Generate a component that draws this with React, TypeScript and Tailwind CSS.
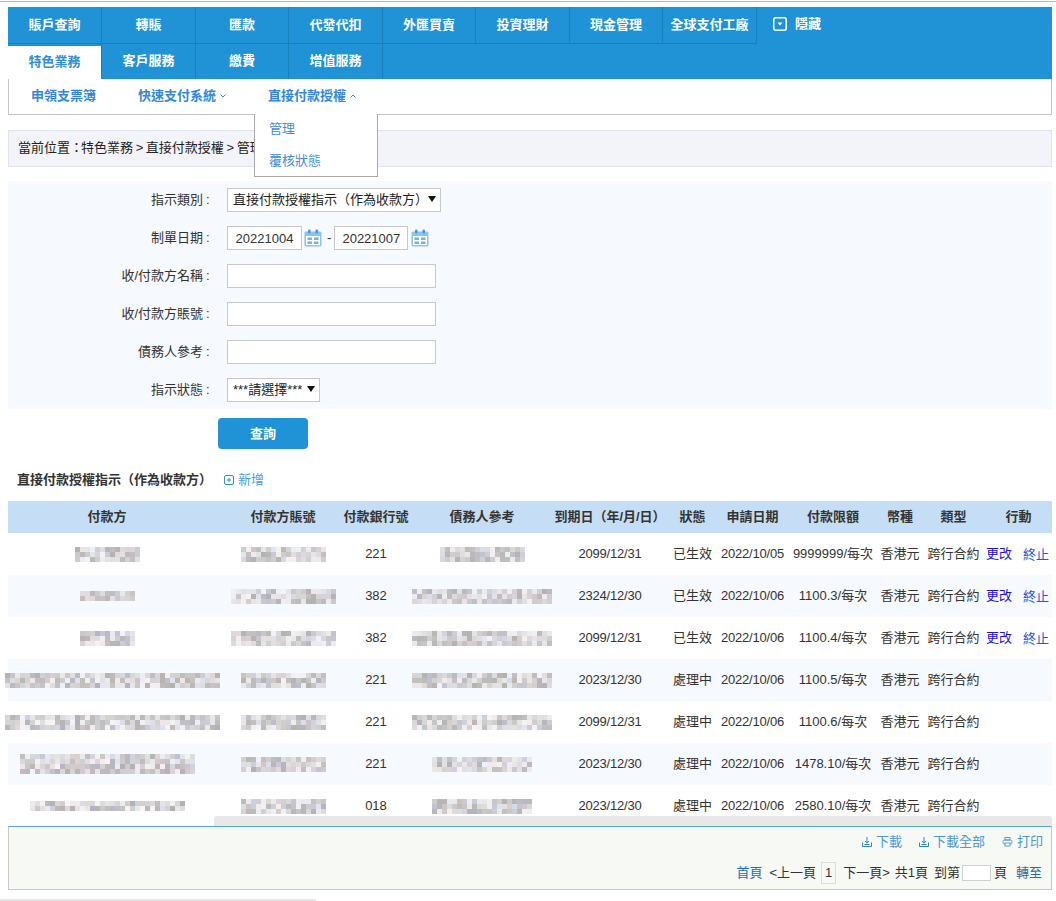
import { ReactNode } from 'react'

const topTabs = [
  { label: '賬戶查詢', width: 'w-[94px]' },
  { label: '轉賬', width: 'w-[94px]' },
  { label: '匯款', width: 'w-[93px]' },
  { label: '代發代扣', width: 'w-[94px]' },
  { label: '外匯買賣', width: 'w-[93px]' },
  { label: '投資理財', width: 'w-[94px]' },
  { label: '現金管理', width: 'w-[93px]' },
  { label: '全球支付工廠', width: 'w-[94px]' },
]

const subTabs = [
  { label: '客戶服務', width: 'w-[94px]' },
  { label: '繳費', width: 'w-[93px]' },
  { label: '增值服務', width: 'w-[94px]' },
]

const rows = [
  { payer: [64, 15], shift: '', acct: 84, ref: 84, bank: '221', due: '2099/12/31', status: '已生效', date: '2022/10/05', limit: '9999999/每次', active: true },
  { payer: [54, 10], shift: '', acct: 104, ref: 140, bank: '382', due: '2324/12/30', status: '已生效', date: '2022/10/06', limit: '1100.3/每次', active: true },
  { payer: [54, 15], shift: '', acct: 104, ref: 140, bank: '382', due: '2099/12/31', status: '已生效', date: '2022/10/06', limit: '1100.4/每次', active: true },
  { payer: [212, 15], shift: 'ml-[10px]', acct: 84, ref: 140, bank: '221', due: '2023/12/30', status: '處理中', date: '2022/10/06', limit: '1100.5/每次', active: false },
  { payer: [212, 15], shift: 'ml-[10px]', acct: 84, ref: 140, bank: '221', due: '2099/12/31', status: '處理中', date: '2022/10/06', limit: '1100.6/每次', active: false },
  { payer: [172, 20], shift: '', acct: 84, ref: 100, bank: '221', due: '2023/12/30', status: '處理中', date: '2022/10/06', limit: '1478.10/每次', active: false },
  { payer: [152, 10], shift: '', acct: 84, ref: 100, bank: '018', due: '2023/12/30', status: '處理中', date: '2022/10/06', limit: '2580.10/每次', active: false },
]

// mosaic block standing in for the masked customer data
function Mosaic({ width, height, seed }: { width: number; height: number; seed: number }) {
  const cols = Math.ceil(width / 5)
  const lines = Math.ceil(height / 5)
  let n = seed * 7919 + 17
  const cells = []
  for (let i = 0; i < cols * lines; i++) {
    n = (n * 1103515245 + 12345) & 0x7fffffff
    const v = 178 + ((n >> 8) % 66)
    const tint = (n >> 16) % 4
    const r = v + (tint === 0 ? 8 : 0)
    const b = v + (tint === 1 ? 12 : 0)
    cells.push(<div key={i} className="w-[5px] h-[5px]" style={{ background: `rgb(${r},${v},${b})` }} />)
  }
  return (
    <div className="flex flex-wrap shrink-0" style={{ width: cols * 5, height: lines * 5 }}>
      {cells}
    </div>
  )
}

function CalendarIcon() {
  return (
    <svg width="18" height="18" viewBox="0 0 18 18" className="shrink-0">
      <rect x="0.5" y="2.5" width="17" height="15" rx="1.5" fill="#8cc4ee" />
      <rect x="2" y="7" width="14" height="9" fill="#ffffff" />
      <rect x="4" y="0.5" width="2.5" height="4" rx="1" fill="#3f9adf" />
      <rect x="11.5" y="0.5" width="2.5" height="4" rx="1" fill="#3f9adf" />
      <rect x="3.5" y="8.5" width="4.5" height="2.5" fill="#6fb4e8" />
      <rect x="10" y="8.5" width="4.5" height="2.5" fill="#6fb4e8" />
      <rect x="3.5" y="12.5" width="4.5" height="2.5" fill="#6fb4e8" />
      <rect x="10" y="12.5" width="4.5" height="2.5" fill="#6fb4e8" />
    </svg>
  )
}

function DownloadIcon() {
  return (
    <svg width="10" height="11" viewBox="0 0 10 11" fill="none" stroke="#2b88c8" strokeWidth="1">
      <path d="M0.5 6.5v4h9v-4" />
      <path d="M5 1v6M3 5l2 2.2L7 5" />
      <path d="M2.5 8.5h5" />
    </svg>
  )
}

function PrintIcon() {
  return (
    <svg width="11" height="11" viewBox="0 0 11 11" fill="none" stroke="#5b9fd0" strokeWidth="1">
      <rect x="3" y="1.5" width="5" height="2.5" />
      <rect x="1" y="4" width="9" height="4" rx="1.5" />
      <rect x="3" y="7" width="5" height="3" fill="#f7f9f5" />
    </svg>
  )
}

function Field({ label, children }: { label: string; children: ReactNode }) {
  return (
    <div className="flex items-center h-[24px]">
      <div className="w-[208px] flex justify-end shrink-0">
        <span>{label}</span>
        <span className="w-[13px] pl-[3px]">:</span>
      </div>
      <div className="ml-[11px] flex items-center">{children}</div>
    </div>
  )
}

function SelectBox({ value, width }: { value: string; width: string }) {
  return (
    <div className={`relative h-[24px] bg-white border border-[#c8c8c8] flex items-center pl-[5px] text-[#222] ${width}`}>
      {value}
      <svg width="8" height="6" viewBox="0 0 8 6" className="absolute right-[4px] top-[7px]">
        <path d="M0 0h8L4 6z" fill="#111" />
      </svg>
    </div>
  )
}

const inputCls = 'h-[24px] bg-white border border-[#c8c8c8] outline-none'

export default function App() {
  return (
    <div className="h-[901px] w-[1056px] overflow-hidden bg-white text-[13px] text-[#333] [text-spacing-trim:space-all] font-['Liberation_Sans','Noto_Sans_CJK_TC',sans-serif]">
      <div className="h-[7px] pt-[1px]">
        <div className="h-[1px] bg-[#b8b8b8]" />
      </div>

      <div className="relative ml-2 mr-[4px]">
        <div className="bg-[#2092d6] h-[72px] text-white font-bold">
          <div className="flex h-[37px]">
            {topTabs.map((tab) => (
              <div
                key={tab.label}
                className={`${tab.width} h-[37px] shrink-0 flex items-center justify-center border-r border-b border-[#1a80bd] pb-[1px] whitespace-nowrap`}
              >
                {tab.label}
              </div>
            ))}
            <div className="ml-[16px] h-[34px] flex items-center gap-[8px]">
              <svg width="14" height="14" viewBox="0 0 14 14">
                <rect x="0.75" y="0.75" width="12.5" height="12.5" rx="2" fill="none" stroke="#fff" strokeWidth="1.5" />
                <path d="M4.5 5.5h5L7 8.5z" fill="#fff" />
              </svg>
              <span>隱藏</span>
            </div>
          </div>
          <div className="flex h-[35px]">
            <div className="w-[93px] mt-[2px] h-[33px] bg-white text-[#2f8fd3] flex items-center justify-center shrink-0 pb-[2px]">特色業務</div>
            <div className="w-px bg-[#1a80bd]" />
            {subTabs.map((tab) => (
              <div
                key={tab.label}
                className={`${tab.width} shrink-0 flex items-center justify-center border-r border-[#1a80bd] pb-[1px]`}
              >
                {tab.label}
              </div>
            ))}
          </div>
        </div>

        <div className="h-[36px] border-x border-b border-[#c4c4c4] flex items-center font-bold text-[#3488dc] pb-[2px]">
          <span className="ml-[22px]">申領支票簿</span>
          <span className="ml-[42px] flex items-center gap-[4px]">
            快速支付系統
            <svg width="6" height="4" viewBox="0 0 6 4" fill="none" stroke="#3488dc" strokeWidth="1">
              <path d="M0.5 0.5L3 3l2.5-2.5" />
            </svg>
          </span>
          <span className="ml-[42px] flex items-center gap-[4px]">
            直接付款授權
            <svg width="6" height="4" viewBox="0 0 6 4" fill="none" stroke="#3488dc" strokeWidth="1">
              <path d="M0.5 3.5L3 1l2.5 2.5" />
            </svg>
          </span>
        </div>

        <div className="absolute left-[246px] top-[107px] w-[124px] h-[63px] bg-white border-x border-b border-[#a8a8a8] z-10 pl-[14px] text-[#3f8fdc]">
          <div className="mt-[7px] leading-[15px]">管理</div>
          <div className="mt-[17px] leading-[15px]">覆核狀態</div>
        </div>
      </div>

      <div className="ml-2 mr-[4px] mt-[15px] h-[37px] bg-[#f3f4fa] border border-[#e0e2f2] flex items-center pl-[9px] pb-[2px] text-[#222] [word-spacing:-1px]">
        當前位置<span className="mr-[-2px]">：</span>特色業務 &gt; 直接付款授權 &gt; 管理
      </div>

      <div className="ml-2 mr-[4px] mt-[14px] h-[228px] bg-[#f6f9fd] pt-[7px] flex flex-col gap-[14px]">
        <Field label="指示類別">
          <SelectBox value="直接付款授權指示（作為收款方）" width="w-[214px]" />
        </Field>
        <Field label="制單日期">
          <input className={`${inputCls} w-[75px] text-center`} defaultValue="20221004" />
          <span className="ml-[2px]"><CalendarIcon /></span>
          <span className="ml-[5px] mr-[3px]">-</span>
          <input className={`${inputCls} w-[74px] text-center`} defaultValue="20221007" />
          <span className="ml-[3px]"><CalendarIcon /></span>
        </Field>
        <Field label="收/付款方名稱">
          <input className={`${inputCls} w-[209px] px-[8px]`} />
        </Field>
        <Field label="收/付款方賬號">
          <input className={`${inputCls} w-[209px] px-[8px]`} />
        </Field>
        <Field label="債務人參考">
          <input className={`${inputCls} w-[209px] px-[8px]`} />
        </Field>
        <Field label="指示狀態">
          <SelectBox value="***請選擇***" width="w-[93px]" />
        </Field>
      </div>

      <button className="block ml-[218px] mt-[9px] w-[90px] h-[31px] rounded-[4px] bg-[#2092d6] text-white font-bold text-[13px]">
        查詢
      </button>

      <div className="ml-[17px] mt-[21px] mb-[11px] h-[20px] flex items-center">
        <span className="font-bold text-[#333]">直接付款授權指示（作為收款方）</span>
        <svg width="10" height="10" viewBox="0 0 10 10" fill="none" stroke="#2f8fd3" strokeWidth="1" className="ml-[12px]">
          <rect x="0.5" y="0.5" width="9" height="9" rx="1.5" />
          <path d="M3 5h4M5 3v4" />
        </svg>
        <span className="ml-[4px] text-[#4a9be0]">新增</span>
      </div>

      <div className="relative ml-2 mr-[4px] h-[325px] overflow-y-clip">
        <table className="table-fixed border-collapse w-[1044px]">
          <colgroup>
            <col className="w-[218px]" />
            <col className="w-[114px]" />
            <col className="w-[72px]" />
            <col className="w-[140px]" />
            <col className="w-[116px]" />
            <col className="w-[49px]" />
            <col className="w-[71px]" />
            <col className="w-[90px]" />
            <col className="w-[44px]" />
            <col className="w-[63px]" />
            <col className="w-[67px]" />
          </colgroup>
          <thead>
            <tr className="h-[32px] bg-[#c6def5] whitespace-nowrap">
              <th className="pr-[20px] font-bold">付款方</th>
              <th className="font-bold">付款方賬號</th>
              <th className="font-bold">付款銀行號</th>
              <th className="font-bold">債務人參考</th>
              <th className="font-bold">到期日（年/月/日）</th>
              <th className="font-bold">狀態</th>
              <th className="font-bold">申請日期</th>
              <th className="font-bold">付款限額</th>
              <th className="font-bold">幣種</th>
              <th className="font-bold">類型</th>
              <th className="font-bold">行動</th>
            </tr>
          </thead>
          <tbody>
            {rows.map((row, i) => (
              <tr key={i} className={`h-[42px] text-center whitespace-nowrap ${i % 2 === 1 ? 'bg-[#f6f9fd]' : 'bg-white'}`}>
                <td className="pr-[20px]">
                  <div className={`flex justify-center ${row.shift}`}><Mosaic width={row.payer[0]} height={row.payer[1]} seed={i + 1} /></div>
                </td>
                <td>
                  <div className="flex justify-center"><Mosaic width={row.acct} height={15} seed={i + 11} /></div>
                </td>
                <td>{row.bank}</td>
                <td>
                  <div className="flex justify-center"><Mosaic width={row.ref} height={15} seed={i + 21} /></div>
                </td>
                <td className="tracking-[-0.2px]">{row.due}</td>
                <td>{row.status}</td>
                <td className="tracking-[-0.2px]">{row.date}</td>
                <td>{row.limit}</td>
                <td>香港元</td>
                <td>跨行合約</td>
                <td>
                  {row.active && (
                    <div className="flex justify-end gap-[11px] pr-[3px]">
                      <span className="text-[#1c14dc]">更改</span>
                      <span className="text-[#2a50e6] mt-[1px]">終止</span>
                    </div>
                  )}
                </td>
              </tr>
            ))}
          </tbody>
        </table>
        <div className="absolute left-[206px] right-0 bottom-0 h-[10px] rounded-t-[3px] bg-[#e8e8e8]" />
      </div>

      <div className="ml-2 mr-[4px] h-[64px] bg-[#f7f9f5] border border-[#c8c8c8] border-t-[#5aa5e6] pr-[8px]">
        <div className="flex justify-end items-center h-[29px] text-[#4c97d4]">
          <span className="flex items-center gap-[4px]"><DownloadIcon />下載</span>
          <span className="ml-[17px] flex items-center gap-[4px]"><DownloadIcon />下載全部</span>
          <span className="ml-[17px] flex items-center gap-[4px]"><PrintIcon />打印</span>
        </div>
        <div className="flex justify-end items-center h-[30px] mt-[2px] pr-[1px]">
          <span className="text-[#1f6fa8]">首頁</span>
          <span className="ml-[7px]">&lt;上一頁</span>
          <span className="ml-[5px] w-[15px] h-[22px] border border-[#dcdcdc] flex items-center justify-center">1</span>
          <span className="ml-[7px]">下一頁&gt;</span>
          <span className="ml-[5px]">共1頁</span>
          <span className="ml-[6px]">到第</span>
          <input className="ml-[2px] w-[29px] h-[16px] bg-white border border-[#d0d0d0] outline-none" />
          <span className="ml-[3px]">頁</span>
          <span className="ml-[9px] text-[#1f6fa8]">轉至</span>
        </div>
      </div>

      <div className="mt-[9px] h-[2px] w-[316px] bg-[#e6e6e6]" />
    </div>
  )
}
